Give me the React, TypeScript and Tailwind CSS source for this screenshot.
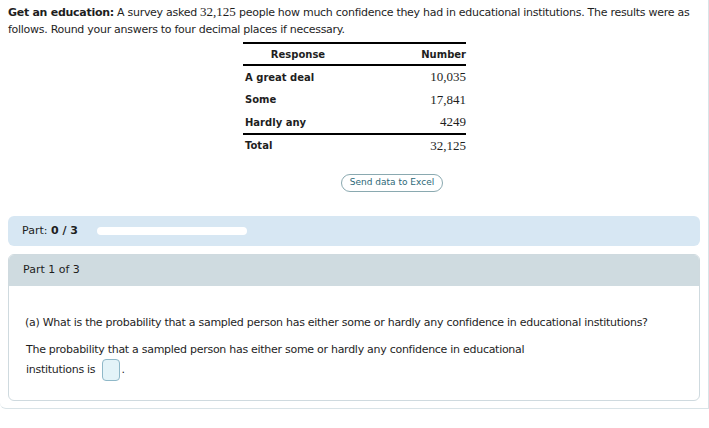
const verdana = { fontFamily: '"DejaVu Sans", Verdana, sans-serif' };
const serif = { fontFamily: '"Liberation Serif", "Times New Roman", serif' };

const rows = [
  { label: 'A great deal', value: '10,035' },
  { label: 'Some', value: '17,841' },
  { label: 'Hardly any', value: '4249' },
];

function DataTable() {
  return (
    <table className="ml-[243px] w-[223px] border-collapse border-t-2 border-black text-[10px]">
      <thead>
        <tr className="border-b-2 border-black">
          <th className="h-[22px] w-[110px] text-center font-bold">Response</th>
          <th className="h-[22px] text-right font-bold">Number</th>
        </tr>
      </thead>
      <tbody>
        {rows.map((r, i) => (
          <tr key={r.label} className={i === rows.length - 1 ? 'border-b-2 border-black' : ''}>
            <td className="h-[23px] pl-[2px] font-bold">{r.label}</td>
            <td className="h-[23px] text-right text-[13px]" style={serif}>
              {r.value}
            </td>
          </tr>
        ))}
        <tr>
          <td className="h-[22px] pl-[2px] font-bold">Total</td>
          <td className="h-[22px] text-right text-[13px]" style={serif}>
            32,125
          </td>
        </tr>
      </tbody>
    </table>
  );
}

export default function App() {
  return (
    <div className="min-h-[428px] bg-white text-[#1e1e1e]" style={verdana}>
      <div className="rounded-bl-md border-b border-r border-[#d9e3e7] pb-[7px]">
        <p className="px-2 pt-[3px] text-[11px] leading-[17px] tracking-[-0.28px]">
          <b>Get an education:</b> A survey asked{' '}
          <span className="text-[13px] tracking-normal" style={serif}>
            32,125
          </span>{' '}
          people how much confidence they had in educational institutions. The results were as follows. Round your
          answers to four decimal places if necessary.
        </p>

        <div className="mt-[4px]">
          <DataTable />
        </div>

        <div className="mt-[18px] flex justify-center pl-[76px]">
          <button className="h-[18px] rounded-full border border-[#8aa9b0] px-2 text-[9px] text-[#2d6878]">
            Send data to Excel
          </button>
        </div>

        <div className="mx-2 mt-[24px] flex h-[30px] items-center rounded-md bg-[#d7e7f3] px-[14px] text-[11px]">
          <span>
            Part: <b>0 / 3</b>
          </span>
          <div className="ml-[19px] h-[8px] w-[150px] rounded-sm bg-white" />
        </div>

        <div className="mx-2 mt-[8px] overflow-hidden rounded-md border border-[#cfdadf]">
          <div className="flex h-[31px] items-center bg-[#cfdbe0] px-[14px] text-[11px]">Part 1 of 3</div>
          <div className="pb-[20px] pl-[17px] pr-[14px] pt-[29px] text-[11px] tracking-[-0.28px]">
            <p className="-ml-[1px]">
              (a) What is the probability that a sampled person has either some or hardly any confidence in educational institutions?
            </p>
            <p className="mt-[8px] w-[520px] leading-[20px]">
              The probability that a sampled person has either some or hardly any confidence in educational institutions is{' '}
              <span className="-my-[4px] ml-[3px] mr-[2px] inline-block h-[22px] w-[18px] rounded-sm border border-[#8fb8c8] bg-[#e3f3f8] align-middle" />
              .
            </p>
          </div>
        </div>
      </div>
    </div>
  );
}
